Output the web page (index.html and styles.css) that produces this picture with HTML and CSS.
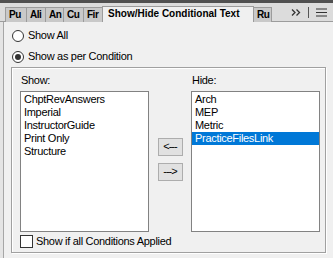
FILE: index.html
```html
<!DOCTYPE html>
<html>
	<head>
		<meta charset="utf-8">
		<title>Show/Hide Conditional Text</title>
		<link rel="stylesheet" href="styles.css">
	</head>
	<body>
		<div class="topbar"></div>
		<div class="tabstrip">
			<div class="tab w21">Pu</div>
			<div class="tab w19">Ali</div>
			<div class="tab w18">An</div>
			<div class="tab w20">Cu</div>
			<div class="tab w19">Fir</div>
			<div class="tab active">Show/Hide Conditional Text</div>
			<div class="tab w18">Ru</div>
			<div class="tools">
				<svg class="chev" width="10" height="7" viewBox="0 0 10 7">
					<path d="M1 0.5 L4 3.5 L1 6.5 M5.5 0.5 L8.5 3.5 L5.5 6.5" fill="none" stroke="#333" stroke-width="1.3"/>
				</svg>
				<span class="sep"></span>
				<svg class="menu" width="11" height="9" viewBox="0 0 11 9">
					<path d="M0 1 H11 M0 4.5 H11 M0 8 H11" stroke="#333" stroke-width="1.2"/>
				</svg>
			</div>
		</div>
		<div class="panel">
			<div class="radio"><span class="dot"></span>Show All</div>
			<div class="radio"><span class="dot on"></span>Show as per Condition</div>
			<div class="group">
				<div class="lists">
					<div class="caption">Show:</div>
					<div></div>
					<div class="caption">Hide:</div>
					<div class="listbox">
						<div class="item">ChptRevAnswers</div>
						<div class="item">Imperial</div>
						<div class="item">InstructorGuide</div>
						<div class="item">Print Only</div>
						<div class="item">Structure</div>
					</div>
					<div class="movers">
						<div class="btn">&lt;---</div>
						<div class="btn">---&gt;</div>
					</div>
					<div class="listbox">
						<div class="item">Arch</div>
						<div class="item">MEP</div>
						<div class="item">Metric</div>
						<div class="item selected">PracticeFilesLink</div>
					</div>
				</div>
				<div class="check"><span class="box"></span>Show if all Conditions Applied</div>
			</div>
			<div class="radio"><span class="dot"></span></div>
		</div>
	</body>
</html>
```

FILE: styles.css
```css
*{
    margin: 0;
    padding: 0;
    box-sizing: border-box;
}
html,body{
    height: 100%;
    overflow: hidden;
}
body{
    background-color: #e4e4e4;
    font: 11px/13px "Liberation Sans", Arial, sans-serif;
    letter-spacing: -0.3px;
    color: #000;
}
.topbar{
    height: 3px;
    background-color: #505050;
}
.tabstrip{
    height: 19px;
    display: flex;
    align-items: flex-end;
    padding-left: 5px;
    background-color: #dcdcdc;
    border-bottom: 1px solid #9c9c9c;
}
.tab{
    height: 15px;
    margin-bottom: -1px;
    padding-left: 3px;
    overflow: hidden;
    white-space: nowrap;
    font-size: 10px;
    font-weight: bold;
    line-height: 14px;
    letter-spacing: -0.5px;
    background-color: #c9c9c9;
    border: 1px solid #9c9c9c;
    border-bottom: 0;
    margin-right: -1px;
}
.tab.w18{ width: 19px; }
.tab.w19{ width: 20px; }
.tab.w20{ width: 21px; }
.tab.w21{ width: 22px; }
.tab.active{
    width: 152px;
    height: 16px;
    padding-left: 5px;
    letter-spacing: 0;
    background-color: #f0f0f0;
}
.tools{
    flex: 1;
    height: 18px;
    display: flex;
    align-items: center;
    justify-content: flex-end;
    padding-right: 6px;
}
.chev{
    margin-right: 7px;
}
.sep{
    width: 1px;
    height: 11px;
    background-color: #555;
    margin-right: 7px;
}
.panel{
    height: 236px;
    overflow: hidden;
    margin-left: 3px;
    border-left: 1px solid #a6a6a6;
    background-color: #f0f0f0;
    padding: 3px 0 0 8px;
}
.radio{
    height: 21px;
    display: flex;
    align-items: center;
    gap: 4px;
}
.dot{
    width: 12px;
    height: 12px;
    border: 1px solid #333;
    border-radius: 50%;
    background-color: #fff;
    display: flex;
    align-items: center;
    justify-content: center;
}
.dot.on::after{
    content: "";
    width: 6px;
    height: 6px;
    border-radius: 50%;
    background-color: #333;
}
.group{
    width: 315px;
    margin-left: -1px;
    border: 1px solid #a0a0a0;
    box-shadow: 1px 1px 0 #fff, inset 1px 1px 0 #fff;
    padding: 6px 5px 4px 8px;
    margin-bottom: 3px;
}
.lists{
    display: grid;
    grid-template-columns: 129px 42px 129px;
    grid-template-rows: 13px 141px;
    row-gap: 4px;
}
.caption{
    padding-left: 1px;
}
.listbox{
    background-color: #fff;
    border: 1px solid #828282;
    padding-top: 1px;
}
.item{
    height: 13px;
    padding-left: 3px;
    white-space: nowrap;
}
.item.selected{
    background-color: #0078d7;
    color: #fff;
}
.movers{
    display: flex;
    flex-direction: column;
    align-items: center;
    justify-content: center;
    gap: 7px;
    padding-bottom: 5px;
}
.btn{
    width: 25px;
    height: 18px;
    background-color: #e1e1e1;
    border: 1px solid #adadad;
    text-align: center;
    line-height: 15px;
    letter-spacing: -1px;
}
.check{
    height: 13px;
    margin-top: 3px;
    display: flex;
    align-items: center;
    gap: 3px;
}
.box{
    width: 13px;
    height: 13px;
    border: 1px solid #333;
    background-color: #fff;
}
```
